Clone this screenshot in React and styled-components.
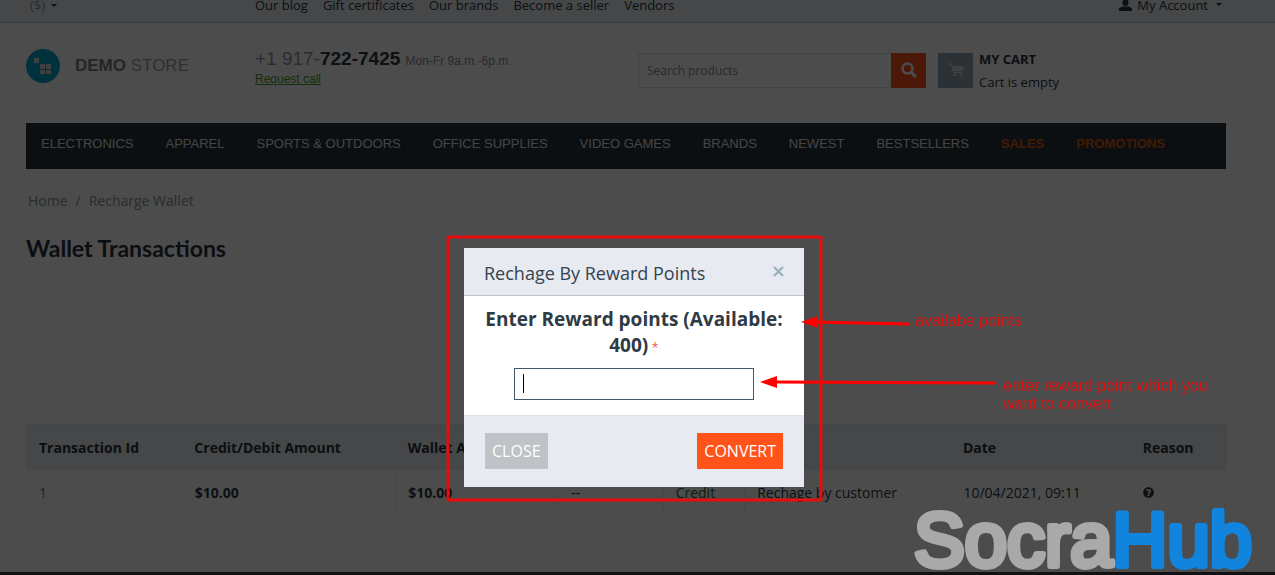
import React, { useState } from 'react'
import styled, { createGlobalStyle } from 'styled-components'
import { FaQuestionCircle } from 'react-icons/fa'

const GlobalStyle = createGlobalStyle`
    * {
        box-sizing: border-box;
    }

    body {
        margin: 0;
        overflow: hidden;
        background: #fff;
        color: #2a3742;
        font-family: "Open Sans", "Noto Sans", sans-serif;
        font-size: 13px;
    }

    a {
        color: inherit;
        text-decoration: none;
    }

    button, input {
        font-family: inherit;
    }
`;

const Page = styled.div`
    min-height: 100vh;
    display: flex;
    flex-direction: column;
`;

const TopBar = styled.div`
    display: flex;
    padding: 0 53px 11px 30px;
    line-height: 11px;
    background: #e7eef3;
    border-bottom: 1px solid #b4c3c9;
`;

const Currency = styled.div`
    width: 225px;
    color: #8c9296;
`;

const TopLinks = styled.nav`
    flex: 1;
    display: flex;
    gap: 15px;
`;

const Account = styled.a`
    display: flex;
    align-items: center;
    gap: 5px;
`;

const Caret = styled.span`
    display: inline-block;
    margin: 0 0 3px 3px;
    border: 3px solid transparent;
    border-top-color: #2a3742;
    border-bottom: 0;
`;

const Content = styled.div`
    padding: 0 49px 0 26px;
`;

const Header = styled.header`
    display: flex;
    align-items: flex-start;
    padding: 26px 0 35px;
`;

const Logo = styled.a`
    display: flex;
    align-items: center;
    gap: 15px;
    width: 229px;
    color: #a0a0a0;
    font: 17px "Liberation Sans", Arial, sans-serif;

    b {
        color: #7d7d7d;
    }
`;

const Phone = styled.div`
    flex: 1;
    color: #8d949c;
    font: 19px/20px "Liberation Sans", Arial, sans-serif;

    b {
        color: #2a3742;
    }

    small {
        color: #8d8d8d;
        font-size: 12px;
    }
`;

const RequestLink = styled.a`
    display: block;
    color: #429b2b;
    font-size: 12px;
    line-height: 16px;
    text-decoration: underline;
`;

const Search = styled.form`
    display: flex;
    width: 24%;
    margin: 4px 12px 0 0;
`;

const SearchInput = styled.input`
    flex: 1;
    min-width: 0;
    height: 35px;
    padding: 0 8px;
    border: 1px solid #e2e2e2;
    border-right: 0;
    font-size: 12px;

    &::placeholder {
        color: #8d8d8d;
        opacity: 1;
    }
`;

const IconButton = styled.button`
    display: flex;
    align-items: center;
    justify-content: center;
    width: 35px;
    height: 35px;
    padding: 0 0 2px;
    border: 0;
    color: #fff;
    background: ${props => props.$color};
`;

const Cart = styled.div`
    display: flex;
    gap: 6px;
    width: 288px;
    height: 35px;
    margin-top: 4px;
`;

const CartText = styled.div`
    display: flex;
    flex-direction: column;
    gap: 5px;
    line-height: 18px;
    margin-top: -3px;
`;

const Menu = styled.nav`
    display: flex;
    gap: 32px;
    padding: 0 15px 4px;
    background: #26323b;
    color: #e2e4e4;
    font: 13px/42px "Liberation Sans", Arial, sans-serif;
`;

const MenuLink = styled.a`
    color: ${props => props.$hot ? '#d95b0c' : 'inherit'};
    font-weight: ${props => props.$hot ? 'bold' : 'normal'};
    white-space: nowrap;
`;

const Breadcrumbs = styled.div`
    display: flex;
    gap: 8px;
    padding: 22px 2px 21px;
    color: #8296a0;
    font-size: 14px;
    line-height: 20px;
`;

const PageTitle = styled.h1`
    margin: 0 0 160px;
    color: #26323b;
    font: bold 23px/32px Lato, sans-serif;
`;

const Table = styled.table`
    width: 100%;
    table-layout: fixed;
    border-collapse: collapse;
    border: 1px solid #e2e8eb;
    font-size: 14px;
`;

const Th = styled.th`
    width: ${props => props.$width};
    height: 45px;
    padding: 0 12px;
    background: #e7eef3;
    color: #26323b;
    text-align: left;
    white-space: nowrap;
`;

const Td = styled.td`
    height: 46px;
    padding: 0 12px;
    border: 1px solid #eef1f3;
    color: ${props => props.$color || '#2a3742'};
    font-weight: ${props => props.$bold ? 'bold' : 'normal'};
    white-space: nowrap;
`;

const Footer = styled.footer`
    height: 3px;
    margin-top: auto;
    background: #3c3f49;
`;

const Overlay = styled.div`
    position: fixed;
    inset: 0;
    display: flex;
    align-items: flex-start;
    justify-content: center;
    padding: 248px 7px 0 0;
    background: rgba(0, 0, 0, 0.7);
`;

const Dialog = styled.form`
    position: relative;
    width: 340px;
    background: #fff;
`;

const DialogHeader = styled.div`
    display: flex;
    align-items: center;
    justify-content: space-between;
    padding: 13px 20px 10px;
    border-bottom: 1px solid #b7c6cf;
    background: #e7eaf0;
`;

const DialogTitle = styled.h3`
    margin: 0;
    color: #33434f;
    font-size: 18px;
    font-weight: normal;
    line-height: 24px;
`;

const CloseIcon = styled.button`
    display: flex;
    margin-bottom: 4px;
    padding: 0;
    border: 0;
    background: none;
    color: #9db2be;
`;

const DialogBody = styled.div`
    padding: 10px 20px 15px;
    text-align: center;
`;

const Label = styled.label`
    display: block;
    margin-bottom: 8px;
    color: #2e3a44;
    font-size: 19px;
    font-weight: bold;
    line-height: 26px;

    span {
        color: #ea6153;
        font-size: 13px;
        font-weight: normal;
    }
`;

const Field = styled.div`
    position: relative;
    width: 240px;
    margin: 0 auto;

    &::before {
        content: "";
        position: absolute;
        left: 9px;
        top: 6px;
        width: 1px;
        height: 19px;
        background: #000;
    }
`;

const PointsInput = styled.input`
    display: block;
    width: 100%;
    height: 32px;
    padding: 0 8px;
    border: 1px solid #43586a;
    font-size: 14px;
`;

const DialogFooter = styled.div`
    display: flex;
    justify-content: space-between;
    padding: 17px 21px 18px;
    border-top: 1px solid #e0e3e8;
    background: #e7eaf0;
`;

const Button = styled.button`
    height: 36px;
    padding: 0 7px;
    border: 0;
    background: ${props => props.$primary ? '#ff5319' : '#bdc3c7'};
    color: #fff;
    font-size: 16px;
`;

const Marks = styled.svg`
    position: absolute;
    left: -20px;
    top: -16px;
    pointer-events: none;
`;

const Note = styled.p`
    position: absolute;
    left: ${props => props.$left};
    top: ${props => props.$top};
    margin: 0;
    color: #e01212;
    font: 16px/18px "Liberation Sans", Arial, sans-serif;
    white-space: nowrap;
`;

const Watermark = styled.svg`
    position: fixed;
    right: 15px;
    bottom: 0;
`;

const menu = ['Electronics', 'Apparel', 'Sports & Outdoors', 'Office Supplies', 'Video Games', 'Brands', 'Newest', 'Bestsellers'];

const columns = [
    ['Transaction Id', '13%'],
    ['Credit/Debit Amount', '17.8%'],
    ['Wallet Amount', '13.6%'],
    ['Status', '8.7%'],
    ['Type', '6.8%'],
    ['Source', '17.2%'],
    ['Date', '15%'],
    ['Reason', '7.9%'],
];

const Home = () => {
    const [points, setPoints] = useState('');

    return (
        <Page>
            <GlobalStyle />

            <TopBar>
                <Currency>($) <Caret /></Currency>
                <TopLinks>
                    <a href="#blog">Our blog</a>
                    <a href="#gift">Gift certificates</a>
                    <a href="#brands">Our brands</a>
                    <a href="#seller">Become a seller</a>
                    <a href="#vendors">Vendors</a>
                </TopLinks>
                <Account href="#account">
                    <svg width="13" height="11" viewBox="0 0 13 11" fill="#2a3742">
                        <ellipse cx="6.500" cy="2.500" rx="3" ry="3.500" />
                        <path d="M0 11V9q0-1.500 4-2.500h5q4 1 4 2.500v2z" />
                    </svg>
                    My Account
                    <Caret />
                </Account>
            </TopBar>

            <Content>
                <Header>
                    <Logo href="#home">
                        <svg width="34" height="34" viewBox="0 0 34 34">
                            <circle cx="17" cy="17" r="17" fill="#00a5c8" />
                            <path fill="#d5d5d5" d="M8 9h5v5H8zM14 15h5v5h-5zM20 15h5v5h-5zM14 21h5v4h-5zM20 21h5v4h-5z" />
                        </svg>
                        <span><b>DEMO</b> STORE</span>
                    </Logo>
                    <Phone>
                        +1 917-<b>722-7425</b> <small>Mon-Fr 9a.m.-6p.m.</small>
                        <RequestLink href="#call">Request call</RequestLink>
                    </Phone>
                    <Search>
                        <SearchInput type="text" placeholder="Search products" aria-label="Search products" />
                        <IconButton type="button" $color="#ff5319" aria-label="Search">
                            <svg width="16" height="16" viewBox="0 0 16 16" fill="none" stroke="#fff">
                                <circle cx="6.500" cy="6.500" r="5" strokeWidth="2.400" />
                                <path d="M10.500 10.500l4.500 4.500" strokeWidth="3" />
                            </svg>
                        </IconButton>
                    </Search>
                    <Cart>
                        <IconButton type="button" $color="#8fa3b0" aria-label="Cart">
                            <svg width="16" height="14" viewBox="0 0 16 14" fill="#d0d8dc">
                                <path d="M4 3h12l-1.500 5H5.500z" />
                                <path d="M0 1h3l3 8.500h8.500" fill="none" stroke="#d0d8dc" strokeWidth="1.300" />
                                <circle cx="6.500" cy="12" r="1.500" />
                                <circle cx="13" cy="12" r="1.500" />
                            </svg>
                        </IconButton>
                        <CartText>
                            <b>MY CART</b>
                            <span>Cart is empty</span>
                        </CartText>
                    </Cart>
                </Header>

                <Menu>
                    {menu.map(item => (
                        <MenuLink key={item} href="#menu">{item.toUpperCase()}</MenuLink>
                    ))}
                    <MenuLink href="#sales" $hot>SALES</MenuLink>
                    <MenuLink href="#promotions" $hot>PROMOTIONS</MenuLink>
                </Menu>

                <Breadcrumbs>
                    <a href="#home">Home</a>
                    <span>/</span>
                    <span>Recharge Wallet</span>
                </Breadcrumbs>

                <PageTitle>Wallet Transactions</PageTitle>

                <Table>
                    <thead>
                        <tr>
                            {columns.map(([name, width]) => (
                                <Th key={name} $width={width}>{name}</Th>
                            ))}
                        </tr>
                    </thead>
                    <tbody>
                        <tr>
                            <Td $color="#6c757c">1</Td>
                            <Td $bold>$10.00</Td>
                            <Td $bold>$10.00</Td>
                            <Td>--</Td>
                            <Td $color="#1d6b2e">Credit</Td>
                            <Td>Rechage by customer</Td>
                            <Td>10/04/2021, 09:11</Td>
                            <Td><FaQuestionCircle size={11} /></Td>
                        </tr>
                    </tbody>
                </Table>
            </Content>

            <Footer />

            <Overlay>
                <Dialog onSubmit={e => e.preventDefault()}>
                    <DialogHeader>
                        <DialogTitle>Rechage By Reward Points</DialogTitle>
                        <CloseIcon type="button" aria-label="Close">
                            <svg width="11" height="11" viewBox="0 0 11 11" stroke="currentColor" strokeWidth="2.400">
                                <path d="M1 1l9 9M10 1l-9 9" />
                            </svg>
                        </CloseIcon>
                    </DialogHeader>
                    <DialogBody>
                        <Label htmlFor="points">Enter Reward points (Available: 400)<span> *</span></Label>
                        <Field>
                            <PointsInput id="points" type="text" value={points} onChange={e => setPoints(e.target.value)} />
                        </Field>
                    </DialogBody>
                    <DialogFooter>
                        <Button type="button">CLOSE</Button>
                        <Button type="submit" $primary>CONVERT</Button>
                    </DialogFooter>

                    <Marks width="560" height="280" viewBox="444 232 560 280" fill="none" stroke="#e80c0c" strokeWidth="3">
                        <rect x="448" y="237" width="373" height="263" rx="1" />
                        <path stroke="#f00" d="M815 322l94 2M775 382l221 1" />
                        <path stroke="none" fill="#f00" d="M801 322l17-6v12zM760 382l17-6v12z" />
                    </Marks>
                    <Note $left="451px" $top="64px">availabe points</Note>
                    <Note $left="539px" $top="129px">enter reward point which you<br />want to convert</Note>
                </Dialog>
            </Overlay>

            <Watermark width="350" height="72" viewBox="0 0 350 72" fontFamily="Liberation Sans, Arial, sans-serif" fontSize="76" strokeWidth="6" strokeLinejoin="round">
                <text x="4" y="63" fill="#a9a9a9" stroke="#a9a9a9">Socra<tspan fill="#1185de" stroke="#1185de">Hub</tspan></text>
            </Watermark>
        </Page>
    )
}

export default Home
